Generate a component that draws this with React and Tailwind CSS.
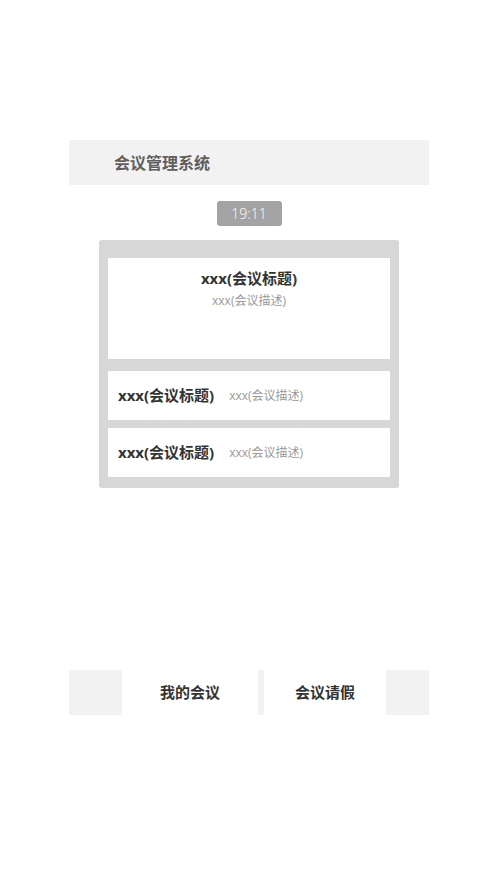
import React from 'react';

const meetings = [
  { title: 'xxx(会议标题)', desc: 'xxx(会议描述)' },
  { title: 'xxx(会议标题)', desc: 'xxx(会议描述)' },
];

const App = () => {
  return (
    <div className="min-h-[877px] bg-white font-['Open_Sans','Noto_Sans_CJK_SC',sans-serif]">
      <div className="ml-[69px] w-[360px] pt-[140px]">
        <div className="flex h-[45px] items-center bg-[#f2f2f2] pl-[45px] text-[16px] font-bold text-[#5f5f5f]">
          会议管理系统
        </div>

        <div className="mx-auto mt-[16px] flex h-[25px] w-[65px] items-center justify-center rounded-[3px] bg-[#a3a3a3] text-[14px] font-light text-white">
          19:11
        </div>

        <div className="mx-auto mt-[14px] w-[300px] rounded-[3px] bg-[#d7d7d7] px-[9px] pb-[11px] pt-[18px]">
          <div className="flex h-[101px] flex-col items-center bg-white pt-[9px]">
            <div className="text-[15px] font-bold leading-[22px] text-[#333]">xxx(会议标题)</div>
            <div className="mt-[3px] text-[12px] leading-[18px] text-[#999]">xxx(会议描述)</div>
          </div>
          {meetings.map((m, i) => (
            <div
              key={i}
              className={`flex h-[49px] items-center bg-white pl-[10px] ${i === 0 ? 'mt-[12px]' : 'mt-[8px]'}`}
            >
              <span className="text-[15px] font-bold text-[#333]">{m.title}</span>
              <span className="ml-[15px] text-[12px] text-[#999]">{m.desc}</span>
            </div>
          ))}
        </div>

        <div className="mt-[182px] flex h-[45px] bg-[#f2f2f2]">
          <div className="w-[53px]" />
          <div className="flex w-[136px] items-center justify-center bg-white text-[15px] font-bold text-[#333]">
            我的会议
          </div>
          <div className="w-[6px]" />
          <div className="flex w-[122px] items-center justify-center bg-white text-[15px] font-bold text-[#333]">
            会议请假
          </div>
          <div className="w-[43px]" />
        </div>
      </div>
    </div>
  );
};

export default App;
